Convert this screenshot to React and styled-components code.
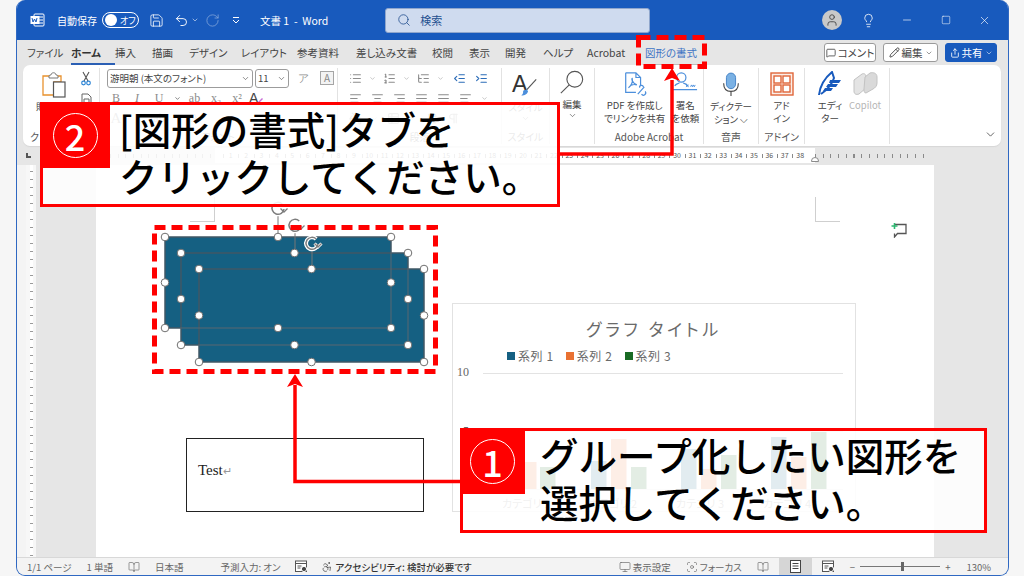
import React from 'react'
import styled, { createGlobalStyle } from 'styled-components'
import {
	Accessibility, AlignCenter, AlignJustify, AlignLeft, AlignRight, ArrowDownAZ, BookOpen, ChevronDown,
	Focus, IndentDecrease, IndentIncrease, Lightbulb, List, ListOrdered, ListTree, MessageSquare,
	Minus, Monitor, PaintBucket, Pencil, Pilcrow, RotateCw, Save, Search, Share, Square, Table2, Undo2, User, X
} from 'lucide-react'

const UI_FONT = '"Noto Sans CJK JP", "Noto Sans", sans-serif'

const GlobalStyle = createGlobalStyle`
	html, body {
		margin: 0;
		padding: 0;
		background: #f5f5f5;
		overflow: hidden;
	}
	body {
		font-family: ${UI_FONT};
		font-feature-settings: "palt";
	}
`

const Screen = styled.div`
	position: relative;
	width: 1024px;
	height: 576px;
	overflow: hidden;
	background: #f6f6f6;
`

const Window = styled.div`
	width: 993px;
	height: 576px;
	margin-left: 16px;
	box-sizing: border-box;
	display: flex;
	flex-direction: column;
	background: #e6e6e6;
	border: 1px solid #2f68c2;
	border-top: 0;
	border-radius: 9px;
	overflow: hidden;
`

/* title bar */
const TitleBar = styled.div`
	height: 40px;
	flex: none;
	background: #185abd;
	display: flex;
	align-items: center;
	color: #fff;
	font-size: 10.5px;
	padding-left: 13px;
`

const TitleItem = styled.div`
	display: flex;
	align-items: center;
	flex: none;
	margin-left: ${p => p.$ml || 0}px;
	font-size: ${p => p.$fs || 10.5}px;
	opacity: ${p => p.$dim ? 0.45 : 1};
	white-space: nowrap;
`

const Toggle = styled.div`
	width: 37px;
	height: 16px;
	box-sizing: border-box;
	border: 1px solid #fff;
	border-radius: 9px;
	display: flex;
	align-items: center;
	padding-left: 2px;
	font-size: 9px;
	gap: 3px;

	&::before {
		content: '';
		width: 12px;
		height: 12px;
		border-radius: 50%;
		background: #fff;
	}
`

const SearchBox = styled.div`
	width: 265px;
	height: 25px;
	box-sizing: border-box;
	background: #cfdbef;
	border: 1px solid #8fa6cc;
	border-radius: 3px;
	color: #24508f;
	display: flex;
	align-items: center;
	gap: 9px;
	padding-left: 11px;
	font-size: 11px;
`

const Avatar = styled.div`
	width: 20px;
	height: 20px;
	border-radius: 50%;
	background: #c9c9c9;
	color: #444;
	display: flex;
	align-items: center;
	justify-content: center;
`

/* tabs */
const TabBar = styled.div`
	height: 25px;
	flex: none;
	display: flex;
	align-items: center;
	background: #e6e6e6;
	padding-left: 10px;
`

const TabList = styled.div`
	display: grid;
	grid-template-columns: 44px 44px 37px 37px 52px 56px 59px 76px 37px 36px 38px 44px 58px 60px;
	font-size: 10.5px;
	color: #444;
	width: 797px;
`

const Tab = styled.div`
	position: relative;
	white-space: nowrap;
	line-height: 20px;
	font-weight: ${p => p.$active ? 700 : 400};
	color: ${p => p.$accent ? '#3f74c4' : p.$active ? '#333' : '#444'};

	&::after {
		content: ${p => p.$active || p.$accent ? "''" : 'none'};
		position: absolute;
		left: 0;
		right: 0;
		bottom: -2px;
		height: ${p => p.$active ? 2 : 1}px;
		background: ${p => p.$active ? '#2b5fb4' : '#bdbdbd'};
	}
`

const TabButton = styled.div`
	width: ${p => p.$w}px;
	height: 19px;
	box-sizing: border-box;
	margin-left: ${p => p.$ml || 0}px;
	display: flex;
	align-items: center;
	justify-content: center;
	gap: 2px;
	border-radius: 3px;
	font-size: 10.5px;
	white-space: nowrap;
	color: ${p => p.$primary ? '#fff' : '#444'};
	background: ${p => p.$primary ? '#185abd' : '#fff'};
	border: 1px solid ${p => p.$primary ? '#185abd' : '#9a9a9a'};
`

/* ribbon */
const Ribbon = styled.div`
	height: 81px;
	flex: none;
	margin: 0 7px 0 6px;
	background: #fff;
	border-radius: 7px;
	display: flex;
	position: relative;
	box-shadow: 0 1px 1px #d6d6d6;
`

const Group = styled.div`
	width: ${p => p.$w}px;
	flex: none;
	box-sizing: border-box;
	display: flex;
	flex-direction: column;
	margin: 3px 0 2px;
	border-right: 1px solid #e2e2e2;
`

const GroupBody = styled.div`
	flex: 1;
	display: flex;
	justify-content: ${p => p.$justify || 'center'};
	gap: ${p => p.$gap || 0}px;
	padding: ${p => p.$pad || '0'};
	min-height: 0;
`

const GroupLabel = styled.div`
	height: 14px;
	line-height: 14px;
	text-align: center;
	font-size: 10px;
	color: #555;
	white-space: nowrap;
`

const BigCommand = styled.div`
	display: flex;
	flex-direction: column;
	align-items: center;
	font-size: 9.5px;
	line-height: 12.5px;
	color: ${p => p.$off ? '#b5b5b5' : '#444'};
	text-align: center;
	white-space: nowrap;
`

const BigIcon = styled.div`
	height: 29px;
	display: flex;
	align-items: center;
	justify-content: center;
	margin-bottom: 1px;
`

const ClipTools = styled.div`
	display: flex;
	flex-direction: column;
	gap: 7px;
	padding-top: 1px;
`

const ToolRow = styled.div`
	display: flex;
	align-items: center;
	gap: ${p => p.$gap || 8}px;
	height: 20px;
	color: #8c8c8c;
	font-size: 11px;
`

const FontRow = styled.div`
	display: grid;
	grid-template-columns: 20px 22px 22px 14px 21px 22px 20px 18px;
	justify-items: center;
	align-items: center;
	height: 20px;
	margin-left: -1px;
`

const IndentPair = styled.div`
	display: flex;
	gap: 9px;
	margin-left: 2px;
	color: #444;
`

const Combo = styled.div`
	width: ${p => p.$w}px;
	height: 19px;
	flex: none;
	box-sizing: border-box;
	background: #fff;
	border: 1px solid #9c9c9c;
	border-radius: 3px;
	display: flex;
	align-items: center;
	justify-content: space-between;
	padding: 0 2px;
	font-size: 9.5px;
	color: #444;
	white-space: nowrap;
`

const Glyph = styled.span`
	font-family: "Liberation Serif", serif;
	font-style: ${p => p.$italic ? 'italic' : 'normal'};
	text-decoration: ${p => p.$under ? 'underline' : 'none'};
	color: #8c8c8c;
	font-size: ${p => p.$size || 12}px;
	margin-left: ${p => p.$ml || 0}px;
`

const BoxedGlyph = styled.span`
	width: 14px;
	height: 14px;
	box-sizing: border-box;
	margin-left: ${p => p.$ml}px;
	border: 1px solid #a5a5a5;
	background: #f3f3f3;
	color: #888;
	font-size: 10px;
	line-height: 12px;
	text-align: center;
`

const Collapse = styled.div`
	position: absolute;
	right: 4px;
	bottom: 5px;
	color: #444;
	display: flex;
`

/* rulers */
const RulerBar = styled.div`
	height: 19px;
	flex: none;
	display: flex;
	align-items: center;
	position: relative;
`

const CornerTab = styled.div`
	width: 5px;
	height: 5px;
	box-sizing: border-box;
	flex: none;
	margin: 0 79px 0 9px;
	border-left: 2px solid #555;
	border-bottom: 2px solid #555;
`

const RulerZone = styled.div`
	width: ${p => p.$w}px;
	height: 15px;
	flex: none;
	display: flex;
	padding-left: ${p => p.$pad || 0}px;
	box-sizing: border-box;
	background: ${p => p.$light ? '#fff' : 'transparent'};
	overflow: hidden;
`

const RulerTicks = styled.div`
	flex: 1;
	background: repeating-linear-gradient(90deg, #8a8a8a 0 1px, transparent 1px 7.7px) center / 100% 4px no-repeat;
`

const RulerCell = styled.div`
	width: 15.4px;
	flex: none;
	text-align: center;
	font-size: 7px;
	line-height: 15px;
	color: #555;
	background: linear-gradient(#8a8a8a, #8a8a8a) left center / 1px 4px no-repeat;
`

const IndentMarker = styled.div`
	position: absolute;
	left: ${p => p.$x}px;
	top: 11px;
	width: 8px;
	height: 5px;
	box-sizing: border-box;
	background: #fff;
	border: 1px solid #8a8a8a;
	border-radius: 4px 4px 0 0;
`

const Workspace = styled.div`
	flex: 1;
	display: flex;
	min-height: 0;
`

const LeftEdge = styled.div`
	width: 9px;
	flex: none;
	background: #f4f4f4;
`

const VRuler = styled.div`
	width: 10px;
	flex: none;
	background: repeating-linear-gradient(#fff 0 6px, #9a9a9a 6px 7px, #fff 7px 8px);
	background-size: 3px 8px;
	background-position: center;
	background-repeat: repeat-y;
	background-color: #f7f7f7;
`

const Gutter = styled.div`
	width: 60px;
	flex: none;
`

const Sheet = styled.div`
	width: 838px;
	flex: none;
	position: relative;
	background: #fff;
`

const CropMark = styled.div`
	position: absolute;
	left: ${p => p.$x}px;
	top: ${p => p.$y}px;
	width: 25px;
	height: 25px;
	box-sizing: border-box;
	border-bottom: 1px solid #cfcfcf;
	${p => p.$side}: 1px solid #cfcfcf;
`

const ShapesLayer = styled.svg`
	position: absolute;
	left: 0;
	top: 0;
	overflow: visible;
`

const TextBox = styled.div`
	position: absolute;
	left: 90px;
	top: 273px;
	width: 238px;
	height: 74px;
	box-sizing: border-box;
	border: 1px solid #222;
	padding: 19px 0 0 11px;
	font-family: "Liberation Serif", serif;
	font-size: 15px;
	line-height: 24px;
	color: #222;
`

const Mark = styled.span`
	color: #999;
	font-size: 11px;
`

const CommentPin = styled.svg`
	position: absolute;
	left: 795px;
	top: 57px;
`

const Chart = styled.div`
	position: absolute;
	left: 356px;
	top: 138px;
	width: 404px;
	height: 209px;
	box-sizing: border-box;
	border: 1px solid #e2e2e2;
	background: #fff;
	display: flex;
	flex-direction: column;
`

const ChartTitle = styled.div`
	margin-top: 12px;
	text-align: center;
	font-size: 17px;
	line-height: 26px;
	letter-spacing: 3.6px;
	color: #6a6a6a;
`

const Legend = styled.div`
	display: flex;
	gap: 12px;
	margin: 6px 0 0 54px;
	font-size: 12px;
	line-height: 16px;
	color: #6a6a6a;
	letter-spacing: 0.6px;
`

const LegendItem = styled.div`
	display: flex;
	align-items: center;
	gap: 3px;

	&::before {
		content: '';
		width: 8px;
		height: 8px;
		background: ${p => p.$color};
	}
`

const Plot = styled.svg`
	display: block;
	flex: none;
`

/* status bar */
const StatusBar = styled.div`
	height: 18px;
	flex: none;
	box-sizing: border-box;
	background: #f3f3f3;
	border-top: 1px solid #d8d8d8;
	display: flex;
	align-items: center;
	justify-content: space-between;
	padding-left: 10px;
	font-size: 9.5px;
	color: #666;
	border-radius: 0 0 8px 8px;
`

const StatusGroup = styled.div`
	display: flex;
	align-items: center;
	height: 100%;
`

const StatusItem = styled.div`
	display: flex;
	align-items: center;
	gap: 2px;
	height: 100%;
	white-space: nowrap;
	margin-left: ${p => p.$ml || 0}px;
	padding: ${p => p.$pad || 0};
	background: ${p => p.$active ? '#d6d6d6' : 'transparent'};
	color: ${p => p.$strong ? '#333' : '#666'};
	font-weight: ${p => p.$strong ? 500 : 400};
`

const ZoomTrack = styled.div`
	width: 80px;
	height: 1px;
	margin: 0 5px;
	background: #777;
	position: relative;

	&::after {
		content: '';
		position: absolute;
		left: 41px;
		top: -4px;
		width: 3px;
		height: 9px;
		background: #666;
	}
`

/* annotations */
const AnnotationLayer = styled.svg`
	position: absolute;
	left: 0;
	top: 0;
	pointer-events: none;
`

const Callout = styled.div`
	position: absolute;
	left: ${p => p.$x}px;
	top: ${p => p.$y}px;
	width: ${p => p.$w}px;
	height: 105px;
	box-sizing: border-box;
	border: 3px solid #f00;
	background: rgba(255, 255, 255, 0.88);
	display: flex;
	align-items: flex-start;
	color: #000;
`

const Badge = styled.div`
	width: ${p => p.$w}px;
	height: 66px;
	flex: none;
	margin: -3px 0 0 -3px;
	background: #f00;
	display: flex;
	align-items: center;
	justify-content: center;
`

const BadgeRing = styled.div`
	width: 45px;
	height: 45px;
	box-sizing: border-box;
	border: 1.5px solid #fff;
	border-radius: 50%;
	color: #fff;
	display: flex;
	align-items: center;
	justify-content: center;
	font-size: 36px;
	line-height: 1;
	font-weight: 500;
	font-feature-settings: normal;
`

const CalloutText = styled.div`
	margin-left: ${p => p.$ml}px;
	font-size: 38.5px;
	line-height: 47px;
	font-weight: 500;
	white-space: nowrap;
	font-feature-settings: normal;
`

const WordLogo = () => (
	<svg width="15" height="14" viewBox="0 0 15 14">
		<rect x="4" y="1" width="10" height="12" rx="1" fill="none" stroke="#fff" />
		<path d="M9 4h4M9 7h4M9 10h4" stroke="#fff" />
		<rect x="0.5" y="3" width="9" height="8" fill="#fff" />
		<path d="M2 5l1 4 1.5-3L6 9l1-4" fill="none" stroke="#185abd" strokeWidth="1" />
	</svg>
)

const CustomizeIcon = () => (
	<svg width="8" height="8" viewBox="0 0 8 8" fill="none" stroke="#fff">
		<path d="M1 1.5h6M1 4l3 3 3-3" />
	</svg>
)

const PasteIcon = () => (
	<svg width="24" height="26" viewBox="0 0 24 26" fill="none">
		<path d="M5 4h14v6H12v13H1V4z" fill="#fff" stroke="#e8912d" strokeWidth="1.3" />
		<path d="M7 4c0-1 2-1 2-1 0-3 5-3 5 0 0 0 2 0 2 1v2H7z" fill="#fff" stroke="#777" />
		<rect x="11.5" y="10" width="11.5" height="15" fill="#fff" stroke="#555" strokeWidth="1.2" />
	</svg>
)

const CutIcon = () => (
	<svg width="10" height="15" viewBox="0 0 10 15" fill="none">
		<path d="M2 1l5 9M8 1L3 10" stroke="#555" strokeWidth="1.1" />
		<circle cx="2.5" cy="12" r="1.8" stroke="#2f86d6" strokeWidth="1.2" />
		<circle cx="7.5" cy="12" r="1.8" stroke="#2f86d6" strokeWidth="1.2" />
	</svg>
)

const CopyIcon = () => (
	<svg width="12" height="14" viewBox="0 0 12 14" fill="#fff" stroke="#666">
		<path d="M1 1h6l3 3v8H1z" />
		<path d="M3 6h5v7H3z" />
	</svg>
)

const ColorA = () => (
	<svg width="16" height="16" viewBox="0 0 16 16">
		<text x="1" y="13" fontSize="14" fill="#444" fontFamily="Liberation Sans, sans-serif">A</text>
		<path d="M9 13l5-5 1 1-5 5z" fill="#c86dd7" />
	</svg>
)

const AcrobatIcon = () => (
	<svg width="26" height="26" viewBox="0 0 28 28" fill="none" stroke="#4c8fdc" strokeWidth="1.3">
		<path d="M4 2h11l5 5v9M4 2v21h11M15 2v5h5" />
		<path d="M7 18c3-2 5-7 4-10-1 0 0 5 5 7-3-1-7 0-9 3z" />
		<path d="M17 25l7-8M19 18a2 2 0 0 1 4-1M21 25a2 2 0 0 0 4-3" />
	</svg>
)

const SignIcon = () => (
	<svg width="28" height="26" viewBox="0 0 28 28" fill="none" stroke="#4c8fdc" strokeWidth="1.3">
		<circle cx="10" cy="7" r="5" />
		<path d="M3 16c2-3 3-2 5-3M17 16c-2-3-3-2-5-3M1 20h26" />
		<path d="M15 17l3-2m0 2l-3-2M20 17l1-2 1 2 1-2 1 2 1-2" strokeWidth="1" />
	</svg>
)

const StyleIcon = () => (
	<svg width="28" height="28" viewBox="0 0 30 30" fill="none">
		<text x="1" y="21" fontSize="25" fill="#333" fontFamily="Liberation Sans, sans-serif">A</text>
		<path d="M27 8L17 19" stroke="#555" strokeWidth="1.2" />
		<path d="M13 20c3-2 5-1 5 1s-3 5-7 4c2-1 2-3 2-5z" fill="#4c8fdc" />
	</svg>
)

const MagnifierIcon = () => (
	<svg width="26" height="26" viewBox="0 0 28 28" fill="none" stroke="#555" strokeWidth="1.2">
		<circle cx="17" cy="10" r="8.5" />
		<path d="M11 16L2 25" />
	</svg>
)

const MicIcon = () => (
	<svg width="22" height="26" viewBox="0 0 24 28" fill="none">
		<rect x="7" y="1" width="10" height="17" rx="5" fill="#7ab1e4" stroke="#3f7fc4" />
		<path d="M4 12c0 6 3 9 8 9s8-3 8-9M12 21v5" stroke="#444" strokeWidth="1.2" />
	</svg>
)

const AddinIcon = () => (
	<svg width="24" height="24" viewBox="0 0 24 24" fill="none" stroke="#e0663a" strokeWidth="1.4">
		<rect x="1" y="1" width="22" height="22" fill="#fbeee8" />
		<rect x="4" y="4" width="7" height="7" fill="#fff" />
		<rect x="13" y="4" width="7" height="7" fill="#fff" />
		<rect x="4" y="13" width="7" height="7" fill="#fff" />
		<rect x="13" y="13" width="7" height="7" fill="#fff" />
	</svg>
)

const EditorIcon = () => (
	<svg width="26" height="26" viewBox="0 0 26 26" fill="none">
		<path d="M2 24C3 14 9 6 15 1l2 6c-2 6-7 12-13 16" stroke="#185abd" strokeWidth="2" />
		<path d="M13 9h11l-2 3H12zM11 13h10l-2 3H9zM8 17h8l-2 3H6z" fill="#185abd" />
	</svg>
)

const CopilotIcon = () => (
	<svg width="28" height="26" viewBox="0 0 28 26" fill="#e4e4e4" stroke="#c2c2c2">
		<path d="M3 9l8-6c2-1 4 0 4 3v11l-7 6c-3 1-5 0-5-3z" />
		<path d="M14 6l5-4c3-1 7 0 7 4v6c0 3-2 5-4 6l-7 4c-2 0-2-2-2-4z" fill="#d9d9d9" />
	</svg>
)

const DocBadgeIcon = () => (
	<svg width="13" height="13" viewBox="0 0 13 13" fill="#fff" stroke="#555">
		<rect x="0.5" y="1" width="11" height="10.5" />
		<path d="M0.5 3.5h11M2.5 6h4M2.5 8h3" />
		<circle cx="9" cy="9" r="2.6" fill="#444" stroke="#fff" />
	</svg>
)

const PageViewIcon = () => (
	<svg width="11" height="13" viewBox="0 0 11 13" fill="#fff" stroke="#444">
		<rect x="0.5" y="0.5" width="10" height="12" />
		<path d="M2.5 3.5h6M2.5 6h6M2.5 8.5h6" />
	</svg>
)

const Chevron = ({ size = 9 }) => <ChevronDown size={size} strokeWidth={1.6} />

const PLOT_GROUPS = [
	[501, 460, 521, 462, 540, 467],
	[591, 461, 611, 439, 631, 467],
	[681, 449, 701, 469, 721, 455],
	[771, 437, 791, 457, 811, 432]
]

const PlotArea = () => {
	const series = ['#156082', '#e97132', '#196b24']
	return (
		<Plot width="402" height="147" viewBox="453 364 402 147">
			<text x="457" y="376" fontSize="12" fill="#666" fontFamily="Liberation Serif, serif">10</text>
			<text x="463" y="435" fontSize="12" fill="#666" fontFamily="Liberation Serif, serif">5</text>
			<path d="M483 373.5h360M483 431.5h360M483 489.5h360" stroke="#e3e3e3" />
			{PLOT_GROUPS.map(g =>
				[0, 2, 4].map(i => (
					<rect key={g[i]} x={g[i]} y={g[i + 1]} width="15.5" height={489 - g[i + 1]} fill={series[i / 2]} />
				))
			)}
			{[502, 589, 676, 763].map((x, i) => (
				<text key={x} x={x} y="508" fontSize="11" fill="#888" fontFamily="Noto Sans CJK JP, sans-serif">
					カテゴリ {i + 1}
				</text>
			))}
		</Plot>
	)
}

const SHAPES = [
	{ x: 69, y: 72, w: 226, h: 91, hx: 182, hy: 43 },
	{ x: 85, y: 88, w: 227, h: 92, hx: 199, hy: 60 },
	{ x: 103, y: 104, w: 225, h: 93, hx: 216, hy: 78 }
]

// arc of the rotate handle, drawn twice: white halo under a grey stroke
const RotateHandle = ({ x, y }) => {
	const arc = `M${x + 6} ${y + 1}a6 6 0 1 1 -1.8 -5`
	const head = `M${x + 2.5} ${y + 0.5}l3.5 3.5 3.5 -3.5`
	return (
		<g fill="none">
			<path d={arc} stroke="#fff" strokeWidth="4" />
			<path d={head} stroke="#fff" strokeWidth="3" />
			<path d={arc} stroke="#7d7d7d" strokeWidth="1.5" />
			<path d={head} stroke="#7d7d7d" strokeWidth="1.3" />
		</g>
	)
}

const SelectedShapes = () => (
	<ShapesLayer width="400" height="220">
		{SHAPES.map(s => (
			<rect key={s.x} x={s.x} y={s.y} width={s.w} height={s.h} fill="#156082" stroke="#0f3a4f" />
		))}
		{SHAPES.map(s => (
			<g key={s.x}>
				<rect x={s.x} y={s.y} width={s.w} height={s.h} fill="none" stroke="#5b6770" />
				<path d={`M${s.hx} ${s.y}V${s.hy + 7}`} stroke="#777" />
				<RotateHandle x={s.hx} y={s.hy} />
				{[0, 0.5, 1].map(fx =>
					[0, 0.5, 1].map(fy =>
						fx === 0.5 && fy === 0.5 ? null : (
							<circle
								key={`${fx}-${fy}`}
								cx={s.x + s.w * fx}
								cy={s.y + s.h * fy}
								r="3.8"
								fill="#fff"
								stroke="#6f6f6f"
							/>
						)
					)
				)}
			</g>
		))}
	</ShapesLayer>
)

const tabs = ['ファイル', 'ホーム', '挿入', '描画', 'デザイン', 'レイアウト', '参考資料', '差し込み文書', '校閲', '表示', '開発', 'ヘルプ', 'Acrobat', '図形の書式']
const range = n => Array.from({ length: n }, (_, i) => i + 1)

export default function App() {
	return (
		<Screen>
			<GlobalStyle />
			<Window>
				<TitleBar>
					<TitleItem><WordLogo /></TitleItem>
					<TitleItem $ml={12} $fs={10}>自動保存</TitleItem>
					<TitleItem $ml={5}><Toggle>オフ</Toggle></TitleItem>
					<TitleItem $ml={10}><Save size={15} strokeWidth={1.3} /></TitleItem>
					<TitleItem $ml={10}><Undo2 size={15} strokeWidth={1.5} /></TitleItem>
					<TitleItem $ml={2}><Chevron size={8} /></TitleItem>
					<TitleItem $ml={6} $dim><RotateCw size={15} strokeWidth={1.3} /></TitleItem>
					<TitleItem $ml={12}><CustomizeIcon /></TitleItem>
					<TitleItem $ml={20}>文書 1&nbsp;&nbsp;-&nbsp;&nbsp;Word</TitleItem>
					<TitleItem $ml={57}>
						<SearchBox><Search size={14} strokeWidth={1.4} />検索</SearchBox>
					</TitleItem>
					<TitleItem $ml={172}><Avatar><User size={14} strokeWidth={1.5} /></Avatar></TitleItem>
					<TitleItem $ml={19}><Lightbulb size={15} strokeWidth={1.3} /></TitleItem>
					<TitleItem $ml={25}><Minus size={12} strokeWidth={1.3} /></TitleItem>
					<TitleItem $ml={28}><Square size={10} strokeWidth={1.3} /></TitleItem>
					<TitleItem $ml={27}><X size={13} strokeWidth={1.2} /></TitleItem>
				</TitleBar>

				<TabBar>
					<TabList>
						{tabs.map((t, i) => (
							<Tab key={t} $active={i === 1} $accent={i === 13}>{t}</Tab>
						))}
					</TabList>
					<TabButton $w={52}><MessageSquare size={10} />コメント</TabButton>
					<TabButton $w={55} $ml={7}><Pencil size={11} />編集<Chevron size={8} /></TabButton>
					<TabButton $w={52} $ml={7} $primary><Share size={10} />共有<Chevron size={8} /></TabButton>
				</TabBar>

				<Ribbon>
					<Group $w={77}>
						<GroupBody $justify="flex-start" $gap={9} $pad="2px 0 0 13px">
							<BigCommand>
								<BigIcon><PasteIcon /></BigIcon>
								貼り付け
							</BigCommand>
							<ClipTools>
								<CutIcon />
								<CopyIcon />
							</ClipTools>
						</GroupBody>
						<GroupLabel>クリップボード</GroupLabel>
					</Group>

					<Group $w={238}>
						<GroupBody $justify="flex-start" $pad="0 0 0 7px">
							<div>
								<ToolRow $gap={2}>
									<Combo $w={146}>游明朝 (本文のフォント)<Chevron /></Combo>
									<Combo $w={34}>11<Chevron /></Combo>
									<Glyph $ml={7} $size={11}>ア</Glyph>
									<BoxedGlyph $ml={9}>A</BoxedGlyph>
								</ToolRow>
								<FontRow>
									<Glyph>B</Glyph>
									<Glyph $italic>I</Glyph>
									<Glyph $under>U</Glyph>
									<Chevron size={7} />
									<Glyph>ab</Glyph>
									<Glyph>x₂</Glyph>
									<Glyph>x²</Glyph>
									<ColorA />
								</FontRow>
								<FontRow>
									<Glyph $size={15}>A</Glyph>
									<Glyph />
									<Glyph>ab</Glyph>
									<Glyph />
									<Glyph>A</Glyph>
								</FontRow>
							</div>
						</GroupBody>
						<GroupLabel>フォント</GroupLabel>
					</Group>

					<Group $w={164}>
						<GroupBody $justify="flex-start" $pad="0 0 0 11px">
							<div>
								<ToolRow $gap={7}>
									<List size={13} /><Chevron size={7} />
									<ListOrdered size={13} /><Chevron size={7} />
									<ListTree size={13} /><Chevron size={7} />
									<IndentPair>
										<IndentDecrease size={13} color="#2b6cb8" />
										<IndentIncrease size={13} color="#2b6cb8" />
									</IndentPair>
								</ToolRow>
								<ToolRow $gap={9}>
									<AlignLeft size={13} />
									<AlignCenter size={13} />
									<AlignRight size={13} />
									<AlignJustify size={13} />
									<AlignJustify size={13} />
									<AlignLeft size={13} />
									<Chevron size={7} />
								</ToolRow>
								<ToolRow $gap={9}>
									<PaintBucket size={13} />
									<Chevron size={7} />
									<Table2 size={13} />
									<Chevron size={7} />
									<ArrowDownAZ size={13} />
									<Pilcrow size={13} />
								</ToolRow>
							</div>
						</GroupBody>
						<GroupLabel>段落</GroupLabel>
					</Group>

					<Group $w={48}>
						<GroupBody $pad="3px 0 0">
							<BigCommand>
								<BigIcon><StyleIcon /></BigIcon>
								スタイル
								<Chevron />
							</BigCommand>
						</GroupBody>
						<GroupLabel>スタイル</GroupLabel>
					</Group>

					<Group $w={45}>
						<GroupBody>
							<BigCommand>
								<BigIcon><MagnifierIcon /></BigIcon>
								編集
								<Chevron />
							</BigCommand>
						</GroupBody>
						<GroupLabel />
					</Group>

					<Group $w={109}>
						<GroupBody $gap={6} $justify="flex-start" $pad="1px 0 0 9px">
							<BigCommand>
								<BigIcon><AcrobatIcon /></BigIcon>
								PDF を作成し<br />でリンクを共有
							</BigCommand>
							<BigCommand>
								<BigIcon><SignIcon /></BigIcon>
								署名<br />を依頼
							</BigCommand>
						</GroupBody>
						<GroupLabel>Adobe Acrobat</GroupLabel>
					</Group>

					<Group $w={55}>
						<GroupBody $pad="2px 0 0">
							<BigCommand>
								<BigIcon><MicIcon /></BigIcon>
								ディクテー<br />ション ⌵
							</BigCommand>
						</GroupBody>
						<GroupLabel>音声</GroupLabel>
					</Group>

					<Group $w={46}>
						<GroupBody $pad="1px 0 0">
							<BigCommand>
								<BigIcon><AddinIcon /></BigIcon>
								アド<br />イン
							</BigCommand>
						</GroupBody>
						<GroupLabel>アドイン</GroupLabel>
					</Group>

					<Group $w={85}>
						<GroupBody $gap={6} $justify="flex-start" $pad="1px 0 0 12px">
							<BigCommand>
								<BigIcon><EditorIcon /></BigIcon>
								エディ<br />ター
							</BigCommand>
							<BigCommand $off>
								<BigIcon><CopilotIcon /></BigIcon>
								Copilot
							</BigCommand>
						</GroupBody>
						<GroupLabel />
					</Group>

					<Collapse><ChevronDown size={13} strokeWidth={1.5} /></Collapse>
				</Ribbon>

				<RulerBar>
					<CornerTab />
					<RulerZone $w={105}><RulerTicks /></RulerZone>
					<RulerZone $w={600} $pad={8} $light>
						{range(38).map(n => <RulerCell key={n}>{n}</RulerCell>)}
					</RulerZone>
					<RulerZone $w={115}><RulerTicks /></RulerZone>
					<IndentMarker $x={794} />
				</RulerBar>

				<Workspace>
					<LeftEdge />
					<VRuler />
					<Gutter />
					<Sheet>
						<CropMark $x={94} $y={32} $side="border-right" />
						<CropMark $x={719} $y={32} $side="border-left" />
						<SelectedShapes />
						<TextBox>Test<Mark>↵</Mark></TextBox>
						<Chart>
							<ChartTitle>グラフ タイトル</ChartTitle>
							<Legend>
								<LegendItem $color="#156082">系列 1</LegendItem>
								<LegendItem $color="#e97132">系列 2</LegendItem>
								<LegendItem $color="#196b24">系列 3</LegendItem>
							</Legend>
							<PlotArea />
						</Chart>
						<CommentPin width="16" height="16" viewBox="0 0 16 16" fill="none">
							<path d="M4 2.5h11v9H6.5L3.5 15v-3.5" stroke="#555" strokeWidth="1.3" />
							<path d="M3.5 1v6M0.5 4h6" stroke="#2eb872" strokeWidth="1.6" />
						</CommentPin>
					</Sheet>
				</Workspace>

				<StatusBar>
					<StatusGroup>
						<StatusItem>1/1 ページ</StatusItem>
						<StatusItem $ml={15}>1 単語</StatusItem>
						<StatusItem $ml={15}><BookOpen size={12} strokeWidth={1.3} /></StatusItem>
						<StatusItem $ml={15}>日本語</StatusItem>
						<StatusItem $ml={37}>予測入力: オン</StatusItem>
						<StatusItem $ml={15}><DocBadgeIcon /></StatusItem>
						<StatusItem $ml={13} $strong><Accessibility size={12} strokeWidth={1.3} />アクセシビリティ: 検討が必要です</StatusItem>
					</StatusGroup>
					<StatusGroup>
						<StatusItem><Monitor size={12} strokeWidth={1.3} />表示設定</StatusItem>
						<StatusItem $ml={15}><Focus size={12} strokeWidth={1.3} />フォーカス</StatusItem>
						<StatusItem $ml={15}><BookOpen size={12} strokeWidth={1.3} /></StatusItem>
						<StatusItem $ml={10} $active $pad="0 11px"><PageViewIcon /></StatusItem>
						<StatusItem $ml={10}><DocBadgeIcon /></StatusItem>
						<StatusItem $ml={15}>−</StatusItem>
						<ZoomTrack />
						<StatusItem>+</StatusItem>
						<StatusItem $ml={16} $pad="0 17px 0 0">130%</StatusItem>
					</StatusGroup>
				</StatusBar>
			</Window>

			<AnnotationLayer width="1024" height="576" viewBox="0 0 1024 576">
				<rect x="638.5" y="37.5" width="66" height="29" fill="none" stroke="#f00" strokeWidth="5" strokeDasharray="12 6" />
				<rect x="154.5" y="227.5" width="281" height="144" fill="none" stroke="#f00" strokeWidth="5" strokeDasharray="11 6" />
				<path d="M560 154H672V80" fill="none" stroke="#f00" strokeWidth="3.5" />
				<path d="M672 68l-8 13 8-3 8 3z" fill="#f00" />
				<path d="M460 481.5H295V385" fill="none" stroke="#f00" strokeWidth="3.5" />
				<path d="M295 374l-8 13 8-3 8 3z" fill="#f00" />
			</AnnotationLayer>

			<Callout $x={40} $y={102} $w={520}>
				<Badge $w={70}><BadgeRing>2</BadgeRing></Badge>
				<CalloutText $ml={9}>[図形の書式]タブを<br />クリックしてください。</CalloutText>
			</Callout>
			<Callout $x={460} $y={428} $w={527}>
				<Badge $w={65}><BadgeRing>1</BadgeRing></Badge>
				<CalloutText $ml={15}>グループ化したい図形を<br />選択してください。</CalloutText>
			</Callout>
		</Screen>
	)
}
